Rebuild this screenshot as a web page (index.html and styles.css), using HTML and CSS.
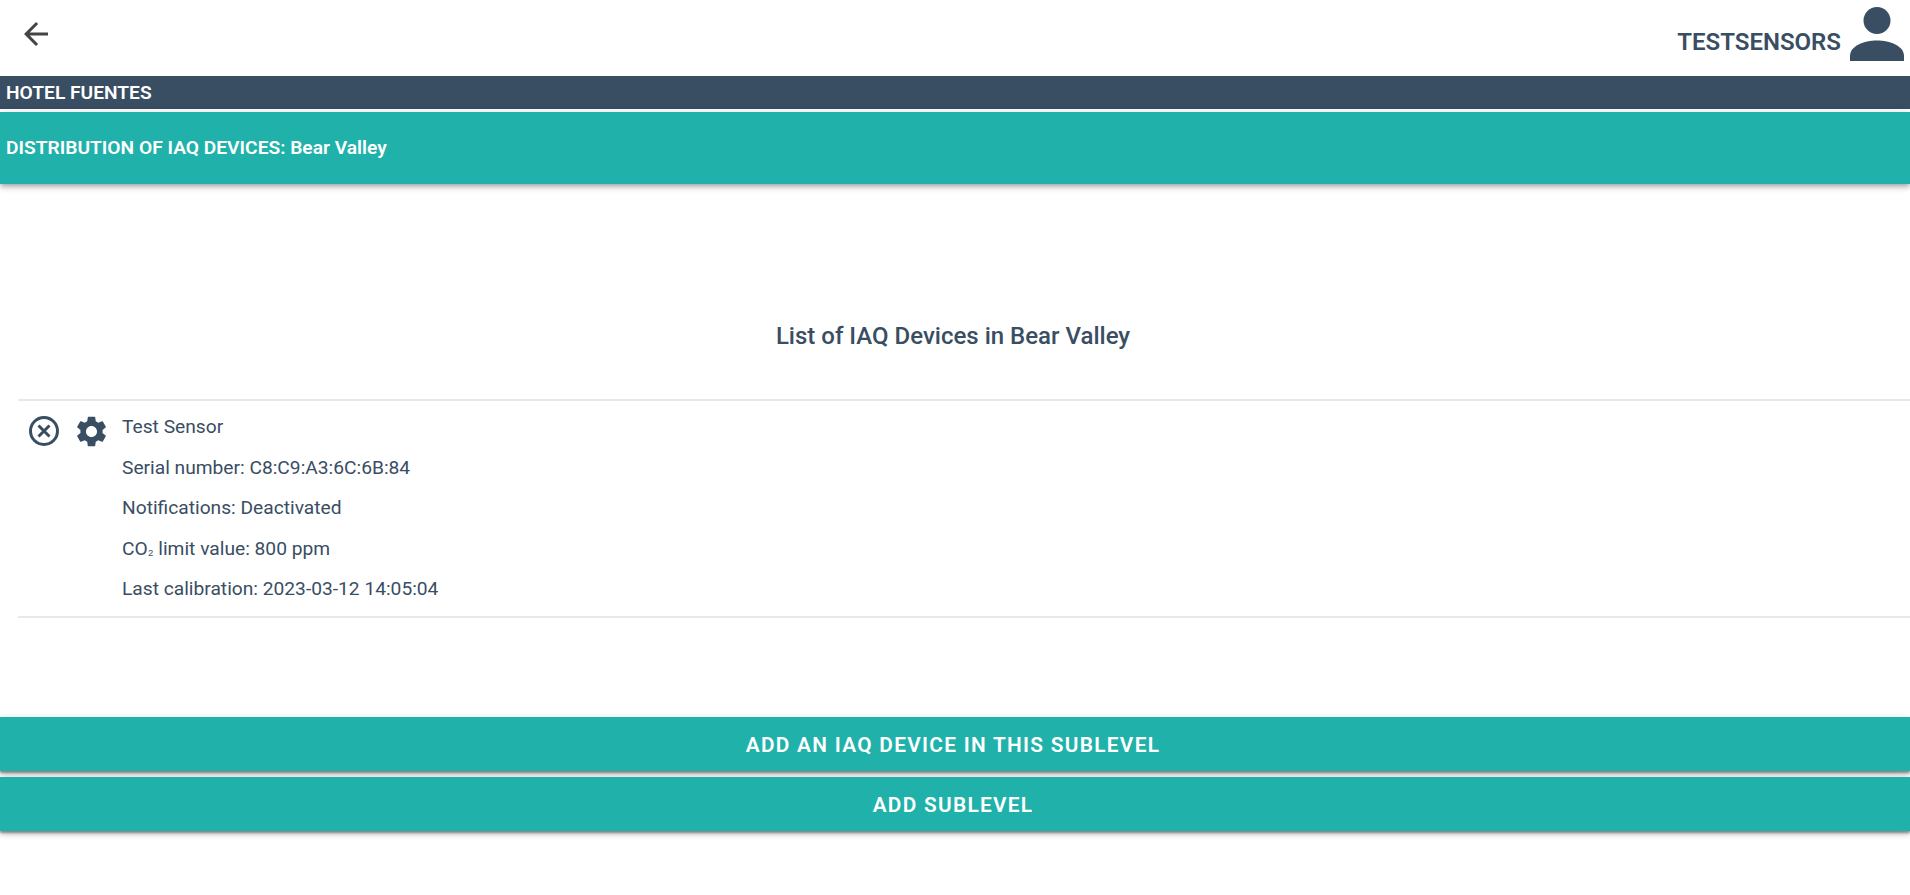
FILE: index.html
```html
<!DOCTYPE html>
<html lang="en">
<head>
    <meta charset="UTF-8">
    <meta name="viewport" content="width=device-width, initial-scale=1.0">
    <title>IAQ Devices</title>
    <link rel="stylesheet" href="styles.css">
</head>
<body>
    <header class="topbar">
        <button class="back-btn" aria-label="Back">
            <svg viewBox="0 0 24 24" width="36" height="36"><path d="M20 11H7.83l5.59-5.59L12 4l-8 8 8 8 1.41-1.41L7.83 13H20v-2z"/></svg>
        </button>
        <div class="user">
            <span class="user-name">TESTSENSORS</span>
            <svg class="user-icon" viewBox="0 0 54 54" width="54" height="54"><circle cx="27" cy="13.5" r="13.5"/><path d="M0 54V49C0 39 14 33.5 27 33.5S54 39 54 49V54Z"/></svg>
        </div>
    </header>

    <div class="hotel-bar">HOTEL FUENTES</div>
    <div class="section-bar">DISTRIBUTION OF IAQ DEVICES: Bear Valley</div>

    <h2 class="list-title">List of IAQ Devices in Bear Valley</h2>

    <div class="device-list">
        <div class="device">
            <div class="device-actions">
                <svg viewBox="0 0 32 32" width="32" height="32"><circle cx="16" cy="16" r="13.5" class="ring"/><path d="M10.5 10.5l11 11M21.5 10.5l-11 11" class="ring"/></svg>
                <svg class="gear" viewBox="0 0 24 24" width="37" height="37"><path d="M19.14 12.94c.04-.3.06-.61.06-.94 0-.32-.02-.64-.07-.94l2.03-1.58a.49.49 0 0 0 .12-.61l-1.92-3.32a.488.488 0 0 0-.59-.22l-2.39.96c-.5-.38-1.03-.7-1.62-.94l-.36-2.54a.484.484 0 0 0-.48-.41h-3.84c-.24 0-.43.17-.47.41l-.36 2.54c-.59.24-1.13.57-1.62.94l-2.39-.96c-.22-.08-.47 0-.59.22L2.74 8.87c-.12.21-.08.47.12.61l2.03 1.58c-.05.3-.09.63-.09.94s.02.64.07.94l-2.03 1.58a.49.49 0 0 0-.12.61l1.92 3.32c.12.22.37.29.59.22l2.39-.96c.5.38 1.03.7 1.62.94l.36 2.54c.05.24.24.41.48.41h3.84c.24 0 .44-.17.47-.41l.36-2.54c.59-.24 1.13-.56 1.62-.94l2.39.96c.22.08.47 0 .59-.22l1.92-3.32c.12-.22.07-.47-.12-.61l-2.01-1.58zM12 15.6c-1.98 0-3.6-1.62-3.6-3.6s1.62-3.6 3.6-3.6 3.6 1.62 3.6 3.6-1.62 3.6-3.6 3.6z"/></svg>
            </div>
            <div class="device-info">
                <p>Test Sensor</p>
                <p>Serial number: C8:C9:A3:6C:6B:84</p>
                <p>Notifications: Deactivated</p>
                <p>CO<span class="sub">₂</span> limit value: 800 ppm</p>
                <p>Last calibration: 2023-03-12 14:05:04</p>
            </div>
        </div>
    </div>

    <div class="actions">
        <button class="action-btn">ADD AN IAQ DEVICE IN THIS SUBLEVEL</button>
        <button class="action-btn">ADD SUBLEVEL</button>
    </div>
</body>
</html>
```

FILE: styles.css
```css
* {
    box-sizing: border-box;
}
body {
    margin: 0;
    font-family: Roboto, sans-serif;
    color: #394d63;
    background: #fff;
}
.topbar {
    height: 76px;
    display: flex;
    justify-content: space-between;
    align-items: flex-start;
    padding: 0 6px 0 18px;
}
.back-btn {
    margin-top: 16px;
    padding: 0;
    border: 0;
    background: none;
    line-height: 0;
}
.back-btn svg {
    fill: #444;
}
.user {
    display: flex;
    align-items: center;
    gap: 9px;
    padding-top: 7px;
}
.user-name {
    font-size: 24px;
    font-weight: 600;
    margin-top: 16px;
}
.user-icon {
    fill: #394d63;
}
.hotel-bar {
    height: 33px;
    line-height: 33px;
    padding-left: 6px;
    background: #394d63;
    color: #fff;
    font-size: 19.2px;
    font-weight: 600;
}
.section-bar {
    height: 72px;
    line-height: 72px;
    margin-top: 3px;
    padding-left: 6px;
    background: #20b2aa;
    color: #fff;
    font-size: 19.2px;
    font-weight: 600;
    box-shadow: 0 2px 4px -1px rgba(0, 0, 0, 0.2), 0 4px 5px rgba(0, 0, 0, 0.14), 0 1px 10px rgba(0, 0, 0, 0.12);
}
.list-title {
    margin: 0;
    padding: 137px 4px 0 0;
    height: 215px;
    text-align: center;
    font-size: 24px;
    font-weight: 500;
    line-height: 30px;
}
.device-list {
    margin-left: 18px;
}
.device {
    display: flex;
    height: 219px;
    border-top: 2px solid #e8e8e8;
    border-bottom: 2px solid #e8e8e8;
}
.device-actions {
    display: flex;
    gap: 13px;
    padding: 14px 0 0 10px;
    width: 104px;
    align-items: flex-start;
}
.device-actions svg {
    fill: #394d63;
    flex: none;
}
.device-actions .gear {
    margin-top: -2px;
}
.device-actions .ring {
    fill: none;
    stroke: #394d63;
    stroke-width: 3;
}
.device-info {
    padding-top: 6px;
}
.device-info p {
    margin: 0;
    height: 40.6px;
    line-height: 40px;
    font-size: 19.2px;
}
.sub {
    font-family: "Liberation Sans", sans-serif;
    font-size: 15px;
}
.actions {
    margin-top: 99px;
    padding-bottom: 40px;
    display: flex;
    flex-direction: column;
    gap: 6px;
}
.action-btn {
    height: 54px;
    padding: 2px 4px 0 0;
    border: 0;
    background: #20b2aa;
    color: #fff;
    font-family: Roboto, sans-serif;
    font-size: 20.8px;
    font-weight: 600;
    letter-spacing: 1.3px;
    box-shadow: 0 2px 2px rgba(0, 0, 0, 0.35), 0 4px 5px rgba(0, 0, 0, 0.14), 0 1px 8px rgba(0, 0, 0, 0.12);
}
```
